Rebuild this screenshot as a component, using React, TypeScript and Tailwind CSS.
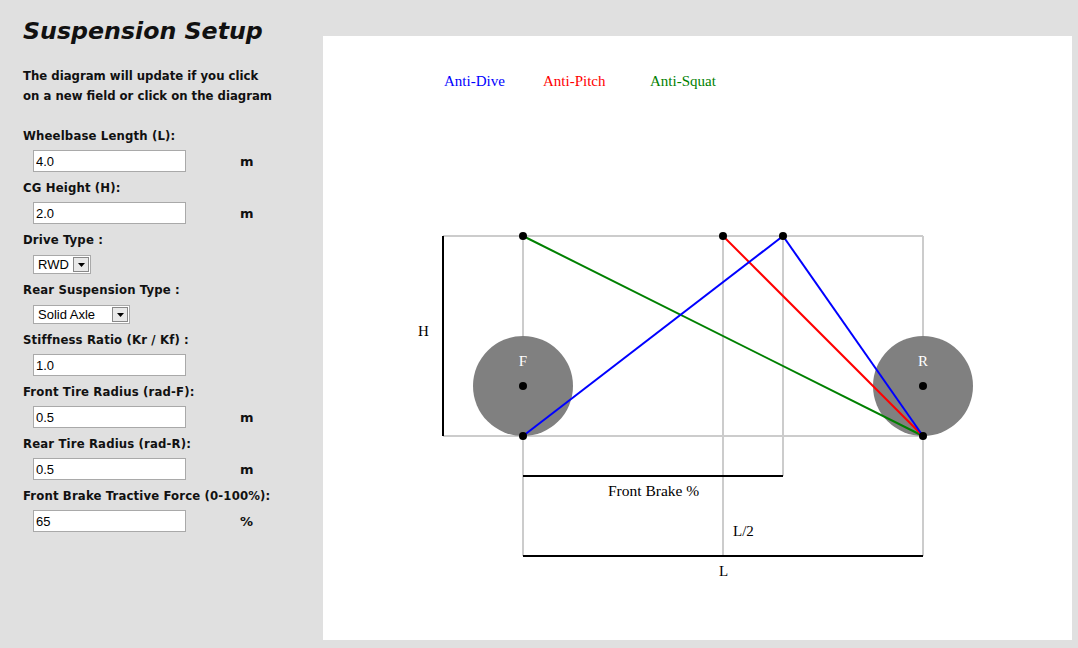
import React from "react";

interface Field {
  label: string;
  value?: string;
  unit?: string;
  select?: { value: string; width: string };
}

const fields: Field[] = [
  { label: "Wheelbase Length (L):", value: "4.0", unit: "m" },
  { label: "CG Height (H):", value: "2.0", unit: "m" },
  { label: "Drive Type :", select: { value: "RWD", width: "w-[58px]" } },
  { label: "Rear Suspension Type :", select: { value: "Solid Axle", width: "w-[97px]" } },
  { label: "Stiffness Ratio (Kr / Kf) :", value: "1.0" },
  { label: "Front Tire Radius (rad-F):", value: "0.5", unit: "m" },
  { label: "Rear Tire Radius (rad-R):", value: "0.5", unit: "m" },
  { label: "Front Brake Tractive Force (0-100%):", value: "65", unit: "%" },
];

function SelectBox({ value, width }: { value: string; width: string }) {
  return (
    <div className={`${width} h-[19px] flex items-center bg-white border border-[#a9a9a9] font-['Liberation_Sans',sans-serif] text-[13px] text-black`}>
      <span className="flex-1 pl-[4px] leading-none">{value}</span>
      <div className="w-[16px] h-[15px] mr-[1px] bg-[#e9e9e9] border border-[#888] flex items-center justify-center">
        <svg width="7" height="4" viewBox="0 0 7 4">
          <path d="M0 0 L7 0 L3.5 4 Z" fill="#000" />
        </svg>
      </div>
    </div>
  );
}

function Sidebar() {
  return (
    <div className="w-[323px] shrink-0 pl-[23px] pt-[16px] font-['DejaVu_Sans',Verdana,sans-serif] text-[#111]">
      <h1 className="text-[23.7px] font-bold italic leading-[30px]">Suspension Setup</h1>
      <p className="mt-[20px] font-['DejaVu_Sans_Condensed','DejaVu_Sans',sans-serif] text-[13px] font-bold leading-[20px]">
        The diagram will update if you click
        <br />
        on a new field or click on the diagram
      </p>
      <div className="mt-[22px] flex flex-col">
        {fields.map((f) => (
          <div key={f.label} className={f.select ? "h-[50px]" : "h-[52px]"}>
            <div className="font-['DejaVu_Sans_Condensed','DejaVu_Sans',sans-serif] text-[13px] font-bold leading-[16px] tracking-[0.15px]">
              {f.label}
            </div>
            <div className={`${f.select ? "mt-[7px]" : "mt-[6px]"} ml-[10px] flex items-center`}>
              {f.select ? (
                <SelectBox value={f.select.value} width={f.select.width} />
              ) : (
                <>
                  <input
                    readOnly
                    value={f.value}
                    className="w-[153px] h-[22px] px-[2px] bg-white border border-[#a9a9a9] font-['Liberation_Sans',sans-serif] text-[13px] text-black outline-none"
                  />
                  {f.unit && <span className="ml-[54px] mt-[2px] text-[13px] font-bold">{f.unit}</span>}
                </>
              )}
            </div>
          </div>
        ))}
      </div>
    </div>
  );
}

function Diagram() {
  const gray = "#cccccc";
  return (
    <svg width="749" height="604" viewBox="0 0 749 604" className="block">
      <g fontFamily="'Liberation Serif', serif" fontSize="15">
        <text x="121" y="50" fill="#0000ff">Anti-Dive</text>
        <text x="220" y="50" fill="#ff0000">Anti-Pitch</text>
        <text x="327" y="50" fill="#008000">Anti-Squat</text>
      </g>

      {/* guide lines */}
      <g stroke={gray} strokeWidth="2" fill="none">
        <line x1="120" y1="200" x2="600" y2="200" />
        <line x1="120" y1="400" x2="600" y2="400" />
        <line x1="200" y1="200" x2="200" y2="520" />
        <line x1="400" y1="200" x2="400" y2="520" />
        <line x1="460" y1="200" x2="460" y2="440" />
        <line x1="600" y1="200" x2="600" y2="520" />
      </g>

      {/* tires */}
      <circle cx="200" cy="350" r="50" fill="#808080" />
      <circle cx="600" cy="350" r="50" fill="#808080" />

      {/* dimension lines */}
      <g stroke="#000" strokeWidth="2">
        <line x1="120" y1="200" x2="120" y2="400" />
        <line x1="200" y1="440" x2="460" y2="440" />
        <line x1="200" y1="520" x2="600" y2="520" />
      </g>

      {/* anti lines */}
      <g strokeWidth="2" fill="none">
        <line x1="200" y1="200" x2="600" y2="400" stroke="#008000" />
        <line x1="400" y1="200" x2="600" y2="400" stroke="#ff0000" />
        <line x1="200" y1="400" x2="460" y2="200" stroke="#0000ff" />
        <line x1="460" y1="200" x2="600" y2="400" stroke="#0000ff" />
      </g>

      <g fill="#000">
        <circle cx="200" cy="200" r="4" />
        <circle cx="400" cy="200" r="4" />
        <circle cx="460" cy="200" r="4" />
        <circle cx="200" cy="400" r="4" />
        <circle cx="600" cy="400" r="4" />
        <circle cx="200" cy="350" r="4" />
        <circle cx="600" cy="350" r="4" />
      </g>

      <g fontFamily="'Liberation Serif', serif" fontSize="15">
        <text x="200" y="330" fill="#fff" textAnchor="middle">F</text>
        <text x="600" y="330" fill="#fff" textAnchor="middle">R</text>
        <text x="95" y="300" fill="#000">H</text>
        <text x="285" y="460" fill="#000" fontSize="15.5">Front Brake %</text>
        <text x="410" y="500" fill="#000">L/2</text>
        <text x="396" y="540" fill="#000">L</text>
      </g>
    </svg>
  );
}

export default function App() {
  return (
    <div className="w-[1078px] h-[648px] bg-[#e0e0e0] flex overflow-hidden">
      <Sidebar />
      <div className="mt-[36px] w-[749px] h-[604px] bg-white">
        <Diagram />
      </div>
    </div>
  );
}
